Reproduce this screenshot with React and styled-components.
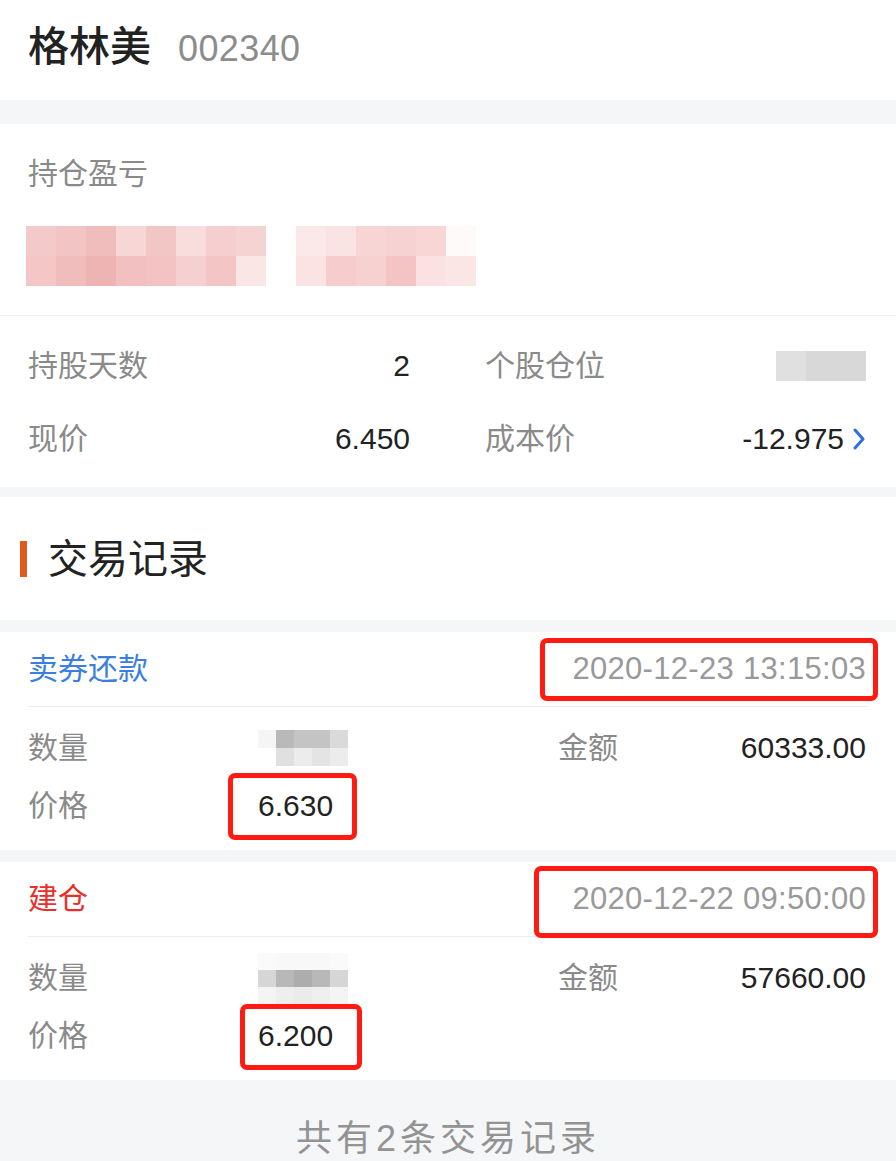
import React from "react";
import styled, { createGlobalStyle } from "styled-components";

const GlobalStyle = createGlobalStyle`
  html, body {
    margin: 0;
    padding: 0;
    background: #f5f6f8;
  }
  body {
    font-family: "Liberation Sans", "Noto Sans CJK SC", sans-serif;
    color: #222;
  }
  * { box-sizing: border-box; }
`;

const Page = styled.div`
  width: 896px;
  min-height: 1161px;
  background: #f5f6f8;
  display: flex;
  flex-direction: column;
  overflow: hidden;
`;

const Header = styled.header`
  height: 100px;
  background: #fff;
  display: flex;
  align-items: baseline;
  padding: 22px 0 0 28px;
  gap: 27px;
`;

const StockName = styled.h1`
  margin: 0;
  font-size: 41px;
  line-height: 50px;
  font-weight: 500;
  color: #222;
`;

const StockCode = styled.span`
  font-size: 36px;
  color: #8c8c8c;
  letter-spacing: 0.4px;
`;

const Card = styled.section`
  background: #fff;
  margin-top: ${(p) => p.$gap || 0}px;
`;

const PnlTop = styled.div`
  padding: 30px 0 29px 0;
`;

const MutedTitle = styled.div`
  padding-left: 28px;
  font-size: 30px;
  line-height: 40px;
  color: #8a8a8a;
`;

const BlurRow = styled.div`
  display: flex;
  gap: 30px;
  margin-top: 32px;
  padding-left: 26px;
`;

const Pixelated = styled.div`
  display: grid;
  grid-template-columns: repeat(${(p) => p.$cols}, ${(p) => p.$cell}px);
  grid-auto-rows: ${(p) => p.$rowH}px;
`;

const Pixel = styled.div`
  background: ${(p) => p.$c};
`;

const Divider = styled.div`
  height: 1px;
  background: #ececec;
  margin: 0 ${(p) => p.$inset || 0}px;
`;

const StatsGrid = styled.div`
  display: grid;
  grid-template-columns: 382px 1fr;
  column-gap: 75px;
  grid-auto-rows: 73px;
  padding: 13px 30px 12px 28px;
`;

const StatCell = styled.div`
  display: flex;
  align-items: center;
  justify-content: space-between;
`;

const Label = styled.span`
  font-size: 30px;
  line-height: 34px;
  color: #8a8a8a;
`;

const Value = styled.span`
  font-size: 30px;
  line-height: 34px;
  color: #222;
  display: inline-flex;
  align-items: center;
  gap: 8px;
`;

const SectionHead = styled.div`
  height: 123px;
  display: flex;
  align-items: center;
  padding-left: 20px;
  gap: 21px;
`;

const Accent = styled.span`
  width: 7px;
  height: 36px;
  background: #e05a1e;
`;

const SectionTitle = styled.h2`
  margin: 0;
  font-size: 40px;
  font-weight: 400;
  color: #222;
  line-height: 48px;
`;

const RecordHead = styled.div`
  height: 74px;
  display: flex;
  align-items: center;
  justify-content: space-between;
  padding: 0 30px 0 28px;
`;

const RecordType = styled.span`
  font-size: 30px;
  line-height: 34px;
  color: ${(p) => p.$color};
`;

const RecordTime = styled.span`
  display: block;
  font-size: 31px;
  line-height: 34px;
  color: #999;
  letter-spacing: 0.3px;
`;

const RecordBody = styled.div`
  display: grid;
  grid-template-columns: 230px 300px 1fr auto;
  grid-auto-rows: 58px;
  align-items: center;
  padding: 12px 30px 15px 28px;
`;

const Highlight = styled.span`
  position: relative;
  display: inline-block;
  &::after {
    content: "";
    position: absolute;
    left: ${(p) => -p.$l}px;
    right: ${(p) => -p.$r}px;
    top: ${(p) => -p.$t}px;
    bottom: ${(p) => -p.$b}px;
    border: 5px solid #ff1a12;
    border-radius: 7px;
    pointer-events: none;
  }
`;

const PriceSlot = styled.div`
  display: flex;
  align-items: center;
`;

const Footer = styled.footer`
  padding-top: 37px;
  text-align: center;
  font-size: 36px;
  line-height: 44px;
  letter-spacing: 4px;
  color: #939393;
`;

const Chevron = () => (
  <svg width="14" height="22" viewBox="0 0 14 22" aria-hidden="true">
    <polyline
      points="3,2 11,11 3,20"
      fill="none"
      stroke="#2f6fe0"
      strokeWidth="3"
      strokeLinecap="round"
      strokeLinejoin="round"
    />
  </svg>
);

const PixelBlock = ({ rows, cell, rowH }) => (
  <Pixelated $cols={rows[0].length} $cell={cell} $rowH={rowH}>
    {rows.flat().map((c, i) => (
      <Pixel key={i} $c={c} />
    ))}
  </Pixelated>
);

const pinkLeft = [
  ["#f4c9c9", "#f3c4c4", "#f0bcbc", "#f7d6d6", "#f3c6c6", "#f9dcdc", "#f5cfcf", "#f6d3d3"],
  ["#f4c6c6", "#f1bcbc", "#eeb4b4", "#f2c0c0", "#f3c3c3", "#f6d0d0", "#f3c5c5", "#fbe6e6"],
];
const pinkRight = [
  ["#fbe9e9", "#fae3e3", "#f8d5d5", "#f7d2d2", "#f8d6d6", "#fffafa"],
  ["#fbe3e3", "#f6cccc", "#f7d0d0", "#f4c3c3", "#fbe1e1", "#fbe6e6"],
];
const grayPosition = [["#e0e0e0", "#d8d8d8", "#d8d8d8"]];
const qty1 = [
  ["#f5f5f5", "#b9b9b9", "#c4c4c4", "#c4c4c4", "#dadada"],
  ["#ffffff", "#e0e0e0", "#ececec", "#e4e4e4", "#ececec"],
];
const qty2 = [
  ["#fafafa", "#f8f8f8", "#f8f8f8", "#f8f8f8", "#fafafa"],
  ["#d6d6d6", "#b8b8b8", "#adadad", "#b8b8b8", "#d6d6d6"],
  ["#f4f4f4", "#eeeeee", "#ebebeb", "#efefef", "#f4f4f4"],
];

const records = [
  {
    type: "卖券还款",
    color: "#3a7fe0",
    time: "2020-12-23 13:15:03",
    timeBox: { l: 32, r: 12, t: 14, b: 15 },
    qty: qty1,
    amount: "60333.00",
    price: "6.630",
    priceBox: { l: 30, r: 24, t: 16, b: 17 },
    gap: 12,
  },
  {
    type: "建仓",
    color: "#e8302a",
    time: "2020-12-22 09:50:00",
    timeBox: { l: 38, r: 12, t: 16, b: 22 },
    qty: qty2,
    amount: "57660.00",
    price: "6.200",
    priceBox: { l: 18, r: 29, t: 15, b: 17 },
    gap: 12,
  },
];

export default function App() {
  return (
    <Page>
      <GlobalStyle />
      <Header>
        <StockName>格林美</StockName>
        <StockCode>002340</StockCode>
      </Header>

      <Card $gap={24}>
        <PnlTop>
          <MutedTitle>持仓盈亏</MutedTitle>
          <BlurRow>
            <PixelBlock rows={pinkLeft} cell={30} rowH={30} />
            <PixelBlock rows={pinkRight} cell={30} rowH={30} />
          </BlurRow>
        </PnlTop>
        <Divider />
        <StatsGrid>
          <StatCell>
            <Label>持股天数</Label>
            <Value>2</Value>
          </StatCell>
          <StatCell>
            <Label>个股仓位</Label>
            <PixelBlock rows={grayPosition} cell={30} rowH={30} />
          </StatCell>
          <StatCell>
            <Label>现价</Label>
            <Value>6.450</Value>
          </StatCell>
          <StatCell>
            <Label>成本价</Label>
            <Value>
              -12.975
              <Chevron />
            </Value>
          </StatCell>
        </StatsGrid>
      </Card>

      <Card $gap={10}>
        <SectionHead>
          <Accent />
          <SectionTitle>交易记录</SectionTitle>
        </SectionHead>
      </Card>

      {records.map((r) => (
        <Card key={r.time} $gap={r.gap}>
          <RecordHead>
            <RecordType $color={r.color}>{r.type}</RecordType>
            <Highlight $l={r.timeBox.l} $r={r.timeBox.r} $t={r.timeBox.t} $b={r.timeBox.b}>
              <RecordTime>{r.time}</RecordTime>
            </Highlight>
          </RecordHead>
          <Divider $inset={28} />
          <RecordBody>
            <Label>数量</Label>
            <PixelBlock rows={r.qty} cell={18} rowH={r.qty.length === 3 ? 17 : 18} />
            <Label>金额</Label>
            <Value>{r.amount}</Value>
            <Label>价格</Label>
            <PriceSlot>
              <Highlight $l={r.priceBox.l} $r={r.priceBox.r} $t={r.priceBox.t} $b={r.priceBox.b}>
                <Value>{r.price}</Value>
              </Highlight>
            </PriceSlot>
          </RecordBody>
        </Card>
      ))}

      <Footer>共有2条交易记录</Footer>
    </Page>
  );
}
